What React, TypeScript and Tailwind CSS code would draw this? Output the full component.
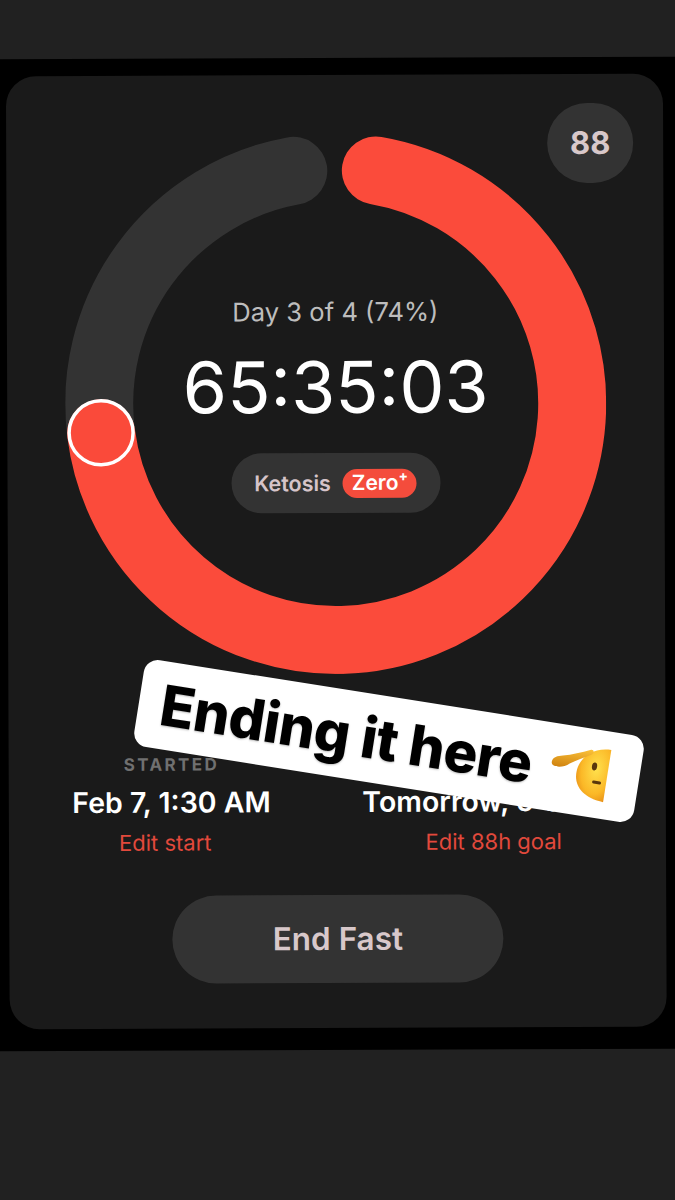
const C = 270.5;
const R = 236.5;

function pt(deg: number) {
  const a = (deg * Math.PI) / 180;
  return [C + R * Math.sin(a), C - R * Math.cos(a)];
}

function arc(from: number, to: number) {
  const [x1, y1] = pt(from);
  const [x2, y2] = pt(to);
  const large = to - from > 180 ? 1 : 0;
  return `M ${x1} ${y1} A ${R} ${R} 0 ${large} 1 ${x2} ${y2}`;
}

function Ring() {
  const [kx, ky] = pt(263);
  return (
    <svg width="541" height="541" viewBox="0 0 541 541" className="absolute left-0 top-0">
      <path d={arc(263, 349.9)} fill="none" stroke="#333333" strokeWidth="68" strokeLinecap="round" />
      <path d={arc(10, 263)} fill="none" stroke="#fb4b3b" strokeWidth="68" strokeLinecap="round" />
      <circle cx={kx} cy={ky - 0.5} r="32" fill="#fa4a3a" stroke="#ffffff" strokeWidth="3.5" />
    </svg>
  );
}

function SaluteFace() {
  return (
    <svg width="64" height="62" viewBox="0 0 64 62" className="shrink-0">
      <defs>
        <radialGradient id="face" cx="0.62" cy="0.4" r="0.8">
          <stop offset="0" stopColor="#ffe14d" />
          <stop offset="0.6" stopColor="#fbb827" />
          <stop offset="1" stopColor="#e07f10" />
        </radialGradient>
        <linearGradient id="hand" x1="0" y1="0" x2="0" y2="1">
          <stop offset="0" stopColor="#fbc23a" />
          <stop offset="1" stopColor="#d08310" />
        </linearGradient>
      </defs>
      <path d="M58 5 C40 5 27 17 27 33 C27 47 38 57 58 58 Z" fill="url(#face)" />
      <path
        d="M1 26 C1 21 6 19 11 18 C20 16 29 12 38 8 C41 7 42 11 39 13 C32 17 25 21 19 25 C13 31 1 32 1 26 Z"
        fill="url(#hand)"
      />
      <ellipse cx="44" cy="24" rx="2.6" ry="4" fill="#5a370c" />
      <rect x="44" y="38" width="9" height="3" rx="1.5" fill="#5a370c" />
    </svg>
  );
}

function DateColumn({ label, value, edit, editClass }: { label: string; value: string; edit: string; editClass: string }) {
  return (
    <div className="flex flex-col items-center">
      <div className="text-[17px] leading-[20px] font-bold tracking-[2.4px] text-[#707070]">{label}</div>
      <div className="mt-[10px] whitespace-nowrap text-[28.5px] leading-[36px] font-[560] text-white">{value}</div>
      <div className={`mt-[8px] text-[22px] leading-[28px] text-[#e2493c] ${editClass}`}>{edit}</div>
    </div>
  );
}

export default function App() {
  return (
    <div
      className="relative h-[1200px] w-[675px] overflow-hidden bg-black"
      style={{ fontFamily: "Inter, 'Noto Sans', sans-serif" }}
    >
      <div className="-ml-[20px] -mt-[20px] flex h-[1240px] w-[715px] -rotate-[0.23deg] flex-col">
        <div className="h-[78px] bg-[#212121]" />
        <div className="relative ml-[28px] mr-[30px] mt-[17px] h-[953px] rounded-[30px] bg-[#1a1a1a] pt-[58px]">
          <div className="absolute right-[30px] top-[29px] flex h-[80px] w-[86px] items-center justify-center rounded-full bg-[#333333] text-[31px] font-bold text-[#d8c8ca]">
            88
          </div>

          <div className="relative ml-[58px] flex h-[541px] w-[541px] flex-col items-center pt-[161px]">
            <Ring />
            <div className="relative text-[25.6px] leading-[36px] text-[#bdbdbd]">Day 3 of 4 (74%)</div>
            <div className="relative mt-[13px] text-[71.5px] leading-[88px] text-white">65:35:03</div>
            <div className="relative mt-[22px] flex h-[60px] w-[209px] items-center justify-center gap-[12px] rounded-full bg-[#333333] pr-[1px]">
              <span className="text-[21.5px] font-[560] text-[#d6c4c9]">Ketosis</span>
              <span className="flex h-[29px] w-[74px] items-center justify-center rounded-full bg-[#f44c3c] text-[21px] font-semibold text-white">
                Zero<sup className="text-[14px] font-bold">+</sup>
              </span>
            </div>
          </div>

          <div className="mt-[80px] grid grid-cols-2 pr-[6px]">
            <DateColumn label="STARTED" value="Feb 7, 1:30 AM" edit="Edit start" editClass="mr-[13px]" />
            <DateColumn label="GOAL" value="Tomorrow, 5:30 PM" edit="Edit 88h goal" editClass="mr-[7px]" />
          </div>

          <div className="mt-[39px] flex justify-center">
            <div className="flex h-[88px] w-[331px] items-center justify-center rounded-full bg-[#333333] text-[31.5px] font-[560] text-[#d8c8ca]">
              End Fast
            </div>
          </div>
        </div>
        <div className="mt-[22px] flex-1 bg-[#212121]" />
      </div>

      <div className="absolute left-[136px] top-[697px] flex h-[88px] w-[506px] rotate-[9deg] items-center justify-between rounded-[14px] bg-white pl-[22px] pr-[26px]">
        <span className="whitespace-nowrap text-[56.5px] font-extrabold tracking-[-0.5px] text-black [text-shadow:0_1px_2px_rgba(0,0,0,0.25)]">
          Ending it here
        </span>
        <SaluteFace />
      </div>
    </div>
  );
}
